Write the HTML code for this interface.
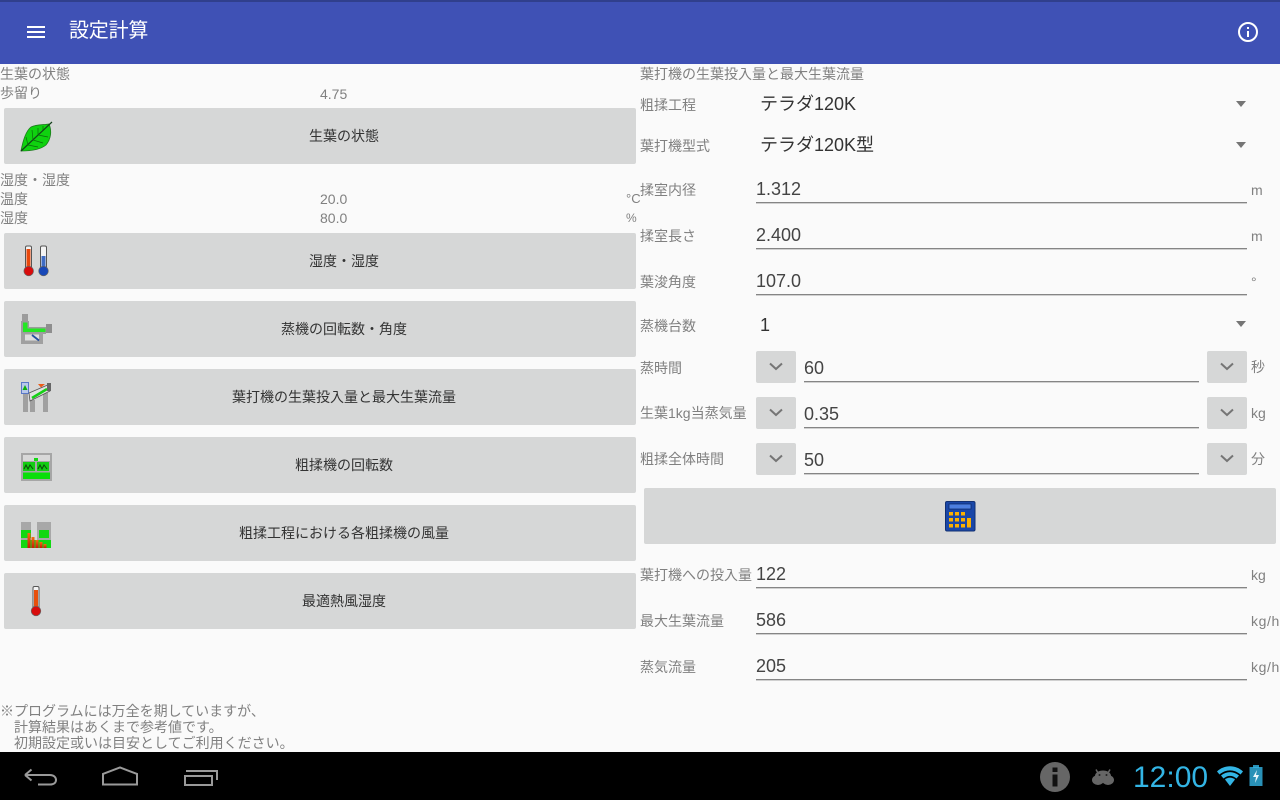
<!DOCTYPE html>
<html lang="ja"><head><meta charset="utf-8"><title>設定計算</title>
<style>
html,body{margin:0;padding:0;background:#fafafa}
body{width:1280px;height:800px;overflow:hidden;position:relative;font-family:"Liberation Sans","Noto Sans CJK JP",sans-serif}
.a{position:absolute;white-space:nowrap}
.t{position:absolute;white-space:nowrap;font-size:14px;line-height:18px;color:#808080}
.btn{position:absolute;left:4px;width:632px;height:56px;background:#d6d7d7;border-radius:2px;font-size:14px;color:#333;line-height:56px;text-align:center;box-sizing:border-box;padding-left:48px}
.btn svg{position:absolute;left:0;top:0}
.v{position:absolute;white-space:nowrap;font-size:18px;line-height:22px;color:#444}
.l{position:absolute;height:1px;background:#858585;border-bottom:1px solid #d0d0d0}
.s{position:absolute;width:40px;height:32px;background:#d6d7d7;border-radius:2px}
.s svg{position:absolute;left:13px;top:9px}
.tri{position:absolute;left:1236px;width:0;height:0;border-left:5.5px solid transparent;border-right:5.5px solid transparent;border-top:6px solid #757575}
</style></head><body>

<div class="a" style="left:0;top:0;width:1280px;height:64px;background:#3f51b5"></div>
<div class="a" style="left:0;top:0;width:1280px;height:2px;background:#303f8c"></div>
<svg class="a" style="left:24px;top:20px" width="24" height="24" viewBox="0 0 24 24"><path d="M3 6h18v2H3zM3 11h18v2H3zM3 16h18v2H3z" fill="#fff"/></svg>
<div class="a" style="left:69px;top:18px;font-size:20px;line-height:27px;color:#fff;letter-spacing:-.2px">設定計算</div>
<svg class="a" style="left:1236px;top:20px" width="24" height="24" viewBox="0 0 24 24"><circle cx="12" cy="12" r="9" fill="none" stroke="#fff" stroke-width="2"/><path d="M11 11h2v6h-2zM11 7h2v2h-2z" fill="#fff"/></svg>

<!-- left -->
<div class="t" style="left:0;top:65px">生葉の状態</div>
<div class="t" style="left:0;top:84px">歩留り</div>
<div class="t" style="left:320px;top:84px;padding-top:1px">4.75</div>
<div class="btn" style="top:108px">生葉の状態
<svg width="60" height="56" viewBox="4 108 60 56"><path d="M21 151C23 140 26 131 31 127 37 124 44 125 49 124 52 131 51 139 46 145 40 150 30 151 21 151z" fill="#0fd20f" stroke="#1e7a1e" stroke-width=".8"/><path d="M21 151L52 122" stroke="#14401a" stroke-width="1.200"/><path d="M28 145L26 137M33 140L32 130M38 135L38 128M43 130L43 126M28 145L38 147M33 140L43 143M38 135L48 137" stroke="#0b6a0b" stroke-width=".7" fill="none"/></svg></div>

<div class="t" style="left:0;top:171px">湿度・湿度</div>
<div class="t" style="left:0;top:190px">温度</div>
<div class="t" style="left:320px;top:190px">20.0</div>
<div class="t" style="left:626px;top:190px;font-size:13px">°C</div>
<div class="t" style="left:0;top:209px">湿度</div>
<div class="t" style="left:320px;top:209px">80.0</div>
<div class="t" style="left:626px;top:209px;font-size:12px">%</div>
<div class="btn" style="top:233px">湿度・湿度
<svg width="60" height="56" viewBox="4 233 60 56"><rect x="25.500" y="246" width="6" height="24" rx="1.500" fill="#f4f4f4" stroke="#555" stroke-width="1"/><rect x="26.500" y="249" width="4" height="20" fill="#e8480c"/><circle cx="28.700" cy="271" r="4.800" fill="#d80c0c" stroke="#666" stroke-width=".7"/><rect x="40.500" y="246" width="6" height="24" rx="1.500" fill="#f4f4f4" stroke="#555" stroke-width="1"/><rect x="41.500" y="256" width="4" height="13" fill="#3f6cc4"/><circle cx="43.500" cy="271" r="4.800" fill="#1848b8" stroke="#666" stroke-width=".7"/></svg></div>

<div class="btn" style="top:301px">蒸機の回転数・角度
<svg width="60" height="56" viewBox="4 301 60 56"><rect x="22" y="314" width="6" height="7" fill="#9c9c9c"/><path d="M21 321h8v6h17v7H21z" fill="#9c9c9c"/><path d="M23 322.500h4.500v6h18v3.500H23z" fill="#22e822"/><rect x="46" y="324" width="6" height="9" fill="#8e8e8e"/><rect x="21" y="333" width="22" height="11" fill="#a0a0a0"/><rect x="25" y="334.500" width="14" height="6" fill="#dedede"/><path d="M32 335l7 5.500" stroke="#2450a0" stroke-width="1.800"/></svg></div>

<div class="btn" style="top:369px">葉打機の生葉投入量と最大生葉流量
<svg width="60" height="56" viewBox="4 369 60 56"><rect x="23" y="394" width="5" height="18" fill="#a0a0a0"/><rect x="30" y="400" width="5" height="12" fill="#a0a0a0"/><rect x="43" y="393" width="5" height="19" fill="#a0a0a0"/><rect x="21.500" y="382.500" width="7" height="11" fill="#b8c8ea" stroke="#5a78c8"/><path d="M22.500 390l2.500-5 2.500 5z" fill="#0bb00b"/><path d="M29 393L50 384v7L30 401z" fill="#e2e2e2" stroke="#555" stroke-width=".8"/><path d="M32 398L47 389" stroke="#16d016" stroke-width="2.500"/><path d="M38 384h7l-4 3.500z" fill="#ec5c18"/><rect x="47" y="383" width="4" height="8" fill="#666"/></svg></div>

<div class="btn" style="top:437px">粗揉機の回転数
<svg width="60" height="56" viewBox="4 437 60 56"><rect x="21" y="453" width="31" height="28" fill="#a6a6a6"/><rect x="23" y="455" width="27" height="6" fill="#d8d8d8"/><rect x="34" y="458" width="4" height="3" fill="#14d814"/><rect x="23" y="462" width="12" height="9" fill="#12cc12"/><rect x="37" y="462" width="12" height="9" fill="#12cc12"/><path d="M24 469l2-4 2 4 2-4 3 4M38 469l2-4 2 4 2-4 3 4" stroke="#0a4a0a" fill="none"/><rect x="23" y="472.500" width="27" height="6.500" fill="#0ade0a"/></svg></div>

<div class="btn" style="top:505px">粗揉工程における各粗揉機の風量
<svg width="60" height="56" viewBox="4 505 60 56"><defs><linearGradient id="g" x1="0" y1="0" x2="0" y2="1"><stop offset="0" stop-color="#f07010"/><stop offset="1" stop-color="#c81808"/></linearGradient></defs><rect x="21" y="522" width="10" height="26" fill="#a8a8a8"/><rect x="37" y="522" width="14" height="26" fill="#a8a8a8"/><rect x="21" y="530" width="10" height="8" fill="#12d812"/><rect x="39" y="530" width="10" height="8" fill="#12d812"/><rect x="21" y="540" width="30" height="8" fill="#12d812"/><rect x="27.500" y="533" width="3" height="15" fill="url(#g)"/><rect x="31.500" y="537" width="3" height="11" fill="url(#g)"/><rect x="35.500" y="540" width="3" height="8" fill="url(#g)"/><rect x="39.500" y="542" width="3" height="6" fill="url(#g)"/><rect x="43.500" y="544" width="3" height="4" fill="url(#g)"/></svg></div>

<div class="btn" style="top:573px">最適熱風湿度
<svg width="60" height="56" viewBox="4 573 60 56"><rect x="33" y="586.500" width="6" height="23" rx="1.500" fill="#f4f4f4" stroke="#555" stroke-width="1"/><rect x="34" y="590" width="4" height="18" fill="#e8500c"/><circle cx="36" cy="611" r="4.800" fill="#d80c0c" stroke="#666" stroke-width=".7"/></svg></div>

<div class="t" style="left:0;top:703px;line-height:16px">※プログラムには万全を期していますが、<br>&emsp;計算結果はあくまで参考値です。<br>&emsp;初期設定或いは目安としてご利用ください。</div>

<!-- right -->
<div class="t" style="left:640px;top:65px">葉打機の生葉投入量と最大生葉流量</div>
<div class="t" style="left:640px;top:96px">粗揉工程</div>
<div class="v" style="left:760px;top:93px;color:#333">テラダ120K</div>
<div class="tri" style="top:101px"></div>
<div class="t" style="left:640px;top:137px">葉打機型式</div>
<div class="v" style="left:760px;top:134px;color:#333">テラダ120K型</div>
<div class="tri" style="top:142px"></div>

<div class="t" style="left:640px;top:181px">揉室内径</div>
<div class="v" style="left:756px;top:178px">1.312</div><div class="l" style="left:756px;top:202px;width:491px"></div>
<div class="t" style="left:1251px;top:181px">m</div>
<div class="t" style="left:640px;top:227px">揉室長さ</div>
<div class="v" style="left:756px;top:224px">2.400</div><div class="l" style="left:756px;top:248px;width:491px"></div>
<div class="t" style="left:1251px;top:227px">m</div>
<div class="t" style="left:640px;top:273px">葉浚角度</div>
<div class="v" style="left:756px;top:270px">107.0</div><div class="l" style="left:756px;top:294px;width:491px"></div>
<div class="t" style="left:1251px;top:273px">°</div>
<div class="t" style="left:640px;top:317px">蒸機台数</div>
<div class="v" style="left:760px;top:314px;color:#333">1</div>
<div class="tri" style="top:321px"></div>

<div class="t" style="left:640px;top:359px">蒸時間</div>
<div class="s" style="left:756px;top:351px"><svg width="14" height="14" viewBox="0 0 14 14"><path d="M1 3.500l6 5.500 6-5.500" fill="none" stroke="#757575" stroke-width="2"/></svg></div>
<div class="v" style="left:804px;top:357px">60</div><div class="l" style="left:804px;top:381px;width:395px"></div>
<div class="s" style="left:1207px;top:351px"><svg width="14" height="14" viewBox="0 0 14 14"><path d="M1 3.500l6 5.500 6-5.500" fill="none" stroke="#757575" stroke-width="2"/></svg></div>
<div class="t" style="left:1251px;top:358px">秒</div>

<div class="t" style="left:640px;top:404px">生葉1kg当蒸気量</div>
<div class="s" style="left:756px;top:397px"><svg width="14" height="14" viewBox="0 0 14 14"><path d="M1 3.500l6 5.500 6-5.500" fill="none" stroke="#757575" stroke-width="2"/></svg></div>
<div class="v" style="left:804px;top:403px">0.35</div><div class="l" style="left:804px;top:427px;width:395px"></div>
<div class="s" style="left:1207px;top:397px"><svg width="14" height="14" viewBox="0 0 14 14"><path d="M1 3.500l6 5.500 6-5.500" fill="none" stroke="#757575" stroke-width="2"/></svg></div>
<div class="t" style="left:1251px;top:404px">kg</div>

<div class="t" style="left:640px;top:450px">粗揉全体時間</div>
<div class="s" style="left:756px;top:443px"><svg width="14" height="14" viewBox="0 0 14 14"><path d="M1 3.500l6 5.500 6-5.500" fill="none" stroke="#757575" stroke-width="2"/></svg></div>
<div class="v" style="left:804px;top:449px">50</div><div class="l" style="left:804px;top:473px;width:395px"></div>
<div class="s" style="left:1207px;top:443px"><svg width="14" height="14" viewBox="0 0 14 14"><path d="M1 3.500l6 5.500 6-5.500" fill="none" stroke="#757575" stroke-width="2"/></svg></div>
<div class="t" style="left:1251px;top:450px">分</div>

<div class="a" style="left:644px;top:488px;width:632px;height:56px;background:#d6d7d7;border-radius:2px"></div>
<svg class="a" style="left:945px;top:501px" width="31" height="31" viewBox="0 0 31 31"><rect x="0.500" y="0.500" width="29.500" height="29.500" rx="1.500" fill="#1a47a8" stroke="#123073"/><rect x="4" y="3" width="22" height="5" fill="#4d7fe0" stroke="#0d2660" stroke-width=".7"/><g fill="#fbb000"><rect x="4" y="11" width="4" height="3.500"/><rect x="10" y="11" width="4" height="3.500"/><rect x="16" y="11" width="4" height="3.500"/><rect x="4" y="17" width="4" height="3.500"/><rect x="10" y="17" width="4" height="3.500"/><rect x="16" y="17" width="4" height="3.500"/><rect x="4" y="23" width="4" height="3.500"/><rect x="10" y="23" width="4" height="3.500"/><rect x="16" y="23" width="4" height="3.500"/><rect x="22" y="17" width="4" height="9.500"/></g></svg>

<div class="t" style="left:640px;top:566px">葉打機への投入量</div>
<div class="v" style="left:756px;top:563px">122</div><div class="l" style="left:756px;top:587px;width:491px"></div>
<div class="t" style="left:1251px;top:566px">kg</div>
<div class="t" style="left:640px;top:612px">最大生葉流量</div>
<div class="v" style="left:756px;top:609px">586</div><div class="l" style="left:756px;top:633px;width:491px"></div>
<div class="t" style="left:1251px;top:612px;letter-spacing:.6px">kg/h</div>
<div class="t" style="left:640px;top:658px">蒸気流量</div>
<div class="v" style="left:756px;top:655px">205</div><div class="l" style="left:756px;top:679px;width:491px"></div>
<div class="t" style="left:1251px;top:658px;letter-spacing:.6px">kg/h</div>

<!-- system bar -->
<div class="a" style="left:0;top:752px;width:1280px;height:48px;background:#000"></div>
<svg class="a" style="left:0;top:752px" width="240" height="48" viewBox="0 752 240 48" fill="none" stroke="#9a9a9a" stroke-width="2">
<path d="M25 775l6.500-5.500M25 775l6.500 5.500M25 775h25c4 0 6 2.500 6 5s-2 4.500-6 4.500H38"/>
<path d="M103 784.500V774l17-6.500 17 6.500v10.500z"/>
<path d="M185 776h27v9h-27zM186 771h31v9"/>
</svg>
<svg class="a" style="left:1040px;top:762px" width="30" height="30" viewBox="0 0 30 30"><circle cx="15" cy="15" r="15" fill="#666"/><rect x="12.500" y="5.500" width="5" height="4.500" fill="#111"/><rect x="12.500" y="12.500" width="5" height="12" fill="#111"/></svg>
<svg class="a" style="left:1090px;top:767px" width="26" height="20" viewBox="0 0 26 20"><ellipse cx="8" cy="13" rx="6" ry="5" fill="#666"/><ellipse cx="18" cy="13" rx="6" ry="5" fill="#666"/><ellipse cx="13" cy="9" rx="8" ry="5.500" fill="#666"/><path d="M6 2.500L8 6M20 2.500L18 6" stroke="#666" stroke-width="1.500"/><circle cx="9.500" cy="8" r="1" fill="#222"/><circle cx="16.500" cy="8" r="1" fill="#222"/></svg>
<div class="a" style="left:1133px;top:760px;font-size:30px;line-height:36px;color:#33b5e5">12:00</div>
<svg class="a" style="left:1217px;top:765px" width="27" height="24" viewBox="0 0 27 24"><path d="M0 6.500C7 -.5 19 -.5 26 6.500L23.500 9.500C17 4 9 4 2.500 9.500z" fill="#33b5e5"/><path d="M4 10.500C9.500 6 16.500 6 22 10.500L19.500 13.500C15 10 11 10 6.500 13.500z" fill="#33b5e5"/><path d="M8 14.500C11 12 15 12 18 14.500L13 21z" fill="#33b5e5"/></svg>
<svg class="a" style="left:1249px;top:765px" width="14" height="22" viewBox="0 0 14 22"><rect x="4" y="0" width="6" height="3" fill="#33b5e5" opacity=".8"/><rect x="0.500" y="2" width="13" height="19" fill="#33b5e5" opacity=".8"/><path d="M8 5L4 12h3l-1 6 4-8H7z" fill="#eaf6fb"/></svg>
</body></html>
